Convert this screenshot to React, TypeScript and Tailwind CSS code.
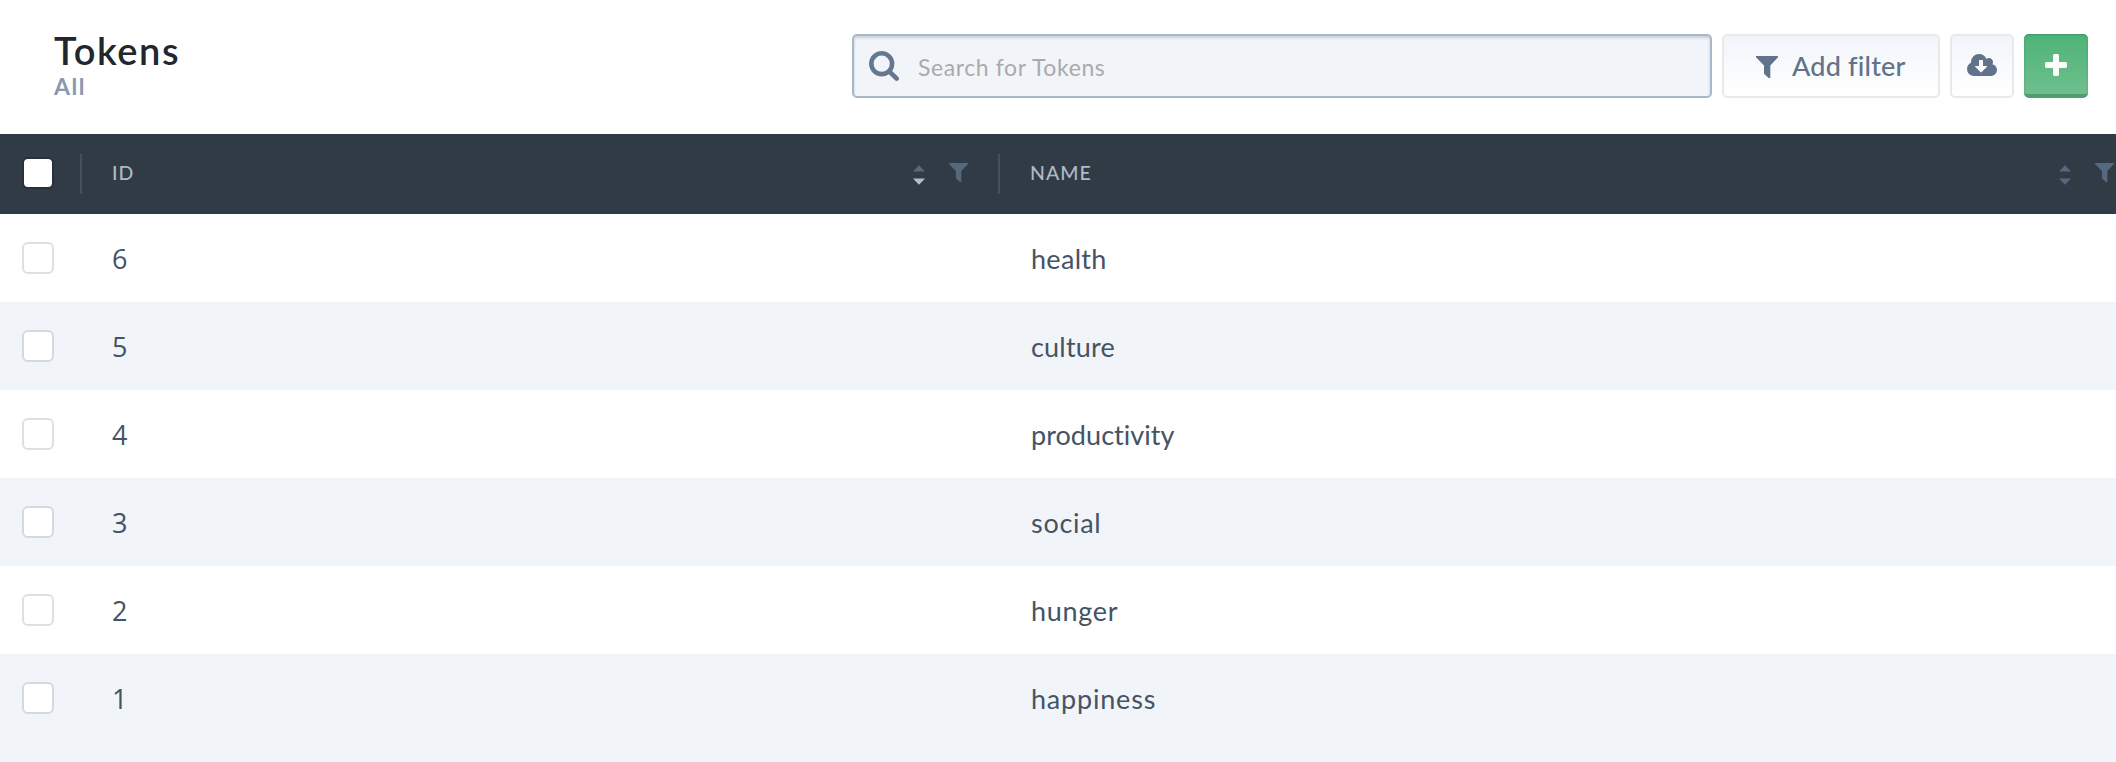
import React from "react";

type IconProps = { d: string; box: string; className: string };

function Icon({ d, box, className }: IconProps) {
  return (
    <svg viewBox={box} className={className} fill="currentColor" preserveAspectRatio="none" aria-hidden="true">
      <path d={d} />
    </svg>
  );
}

const SEARCH =
  "M1216 832q0-185-131.5-316.5t-316.5-131.5-316.5 131.5-131.5 316.5 131.5 316.5 316.5 131.5 316.5-131.5 131.5-316.5zm512 832q0 52-38 90t-90 38q-54 0-90-38l-343-342q-179 124-399 124-143 0-273.5-55.5t-225-150-150-225-55.5-273.5 55.5-273.5 150-225 225-150 273.5-55.5 273.5 55.5 225 150 150 225 55.5 273.5q0 220-124 399l343 343q37 37 37 90z";
const FUNNEL = "M0 0H22V1.2L14.3 9.4V22H12.6L8 17.8V9.4L0 1.2Z";
const CLOUD =
  "M1344 928q0-14-9-23t-23-9h-224v-352q0-13-9.5-22.5t-22.5-9.5h-192q-13 0-22.5 9.5t-9.5 22.5v352h-224q-13 0-22.5 9.5t-9.5 22.5q0 14 9 23l352 352q9 9 23 9t23-9l351-351q10-12 10-24zm640 224q0 159-112.5 271.5t-271.5 112.5h-1088q-185 0-316.5-131.5t-131.5-316.5q0-130 70-240t188-165q-2-30-2-43 0-212 150-362t362-150q156 0 285.5 87t188.5 231q71-62 166-62 106 0 181 75t75 181q0 76-41 138 130 31 213.5 135.5t83.5 238.5z";
const PLUS =
  "M1600 736v192q0 40-28 68t-68 28h-416v416q0 40-28 68t-68 28h-192q-40 0-68-28t-28-68v-416h-416q-40 0-68-28t-28-68v-192q0-40 28-68t68-28h416v-416q0-40 28-68t68-28h192q40 0 68 28t28 68v416h416q40 0 68 28t28 68z";

const rows = [
  { id: "6", name: "health", track: "tracking-[0.3px]" },
  { id: "5", name: "culture", track: "tracking-[0.2px]" },
  { id: "4", name: "productivity", track: "tracking-[0.05px]" },
  { id: "3", name: "social", track: "tracking-[0.7px]" },
  { id: "2", name: "hunger", track: "tracking-[0.7px]" },
  { id: "1", name: "happiness", track: "tracking-[0.8px]" },
];

function SortArrows({ active }: { active?: boolean }) {
  return (
    <svg viewBox="0 0 12 21" className="h-[21px] w-3 shrink-0" aria-hidden="true">
      <path d="M0 7.4L6 1.2L12 7.4Z" fill="#56687d" />
      <path d="M0 14.5H12L6 20.8Z" fill={active ? "#b4bfcb" : "#56687d"} />
    </svg>
  );
}

function HeaderTools({ active }: { active?: boolean }) {
  return (
    <div className="flex shrink-0 items-center">
      <SortArrows active={active} />
      <Icon d={FUNNEL} box="0 0 22 22" className="mb-[3px] ml-6 h-[19px] w-[19px] shrink-0 text-[#56687d]" />
    </div>
  );
}

export default function App() {
  return (
    <div className="flex h-[762px] w-[2116px] flex-col overflow-hidden bg-[#f1f5fa] font-['Lato',sans-serif] [font-variant-ligatures:none]">
      <header className="flex h-[134px] shrink-0 items-start bg-white pt-[34px] pr-7 pl-[54px]">
        <div className="-mt-px flex w-[798px] flex-col">
          <h1 className="h-[38px] text-[38px] leading-[35px] font-semibold tracking-[1.6px] whitespace-nowrap text-[#20272f]">
            Tokens
          </h1>
          <div className="h-7 text-[23px] leading-[30px] font-bold tracking-[1.6px] whitespace-nowrap text-[#8799ae]">
            All
          </div>
        </div>
        <div className="flex h-16 gap-[10px]">
          <label className="flex h-16 w-[860px] shrink-0 items-center rounded-[5px] border-2 border-[#a9b7c7] bg-[#f1f5fa] pl-[15px] shadow-[inset_0_2px_3px_rgba(100,120,145,0.3)]">
            <Icon d={SEARCH} box="64 128 1664 1664" className="h-[30px] w-[30px] shrink-0 text-[#64798f]" />
            <span className="mt-0.5 ml-[19px] text-[23px] leading-8 tracking-[0.6px] whitespace-nowrap text-[#aaaaaa]">
              Search for Tokens
            </span>
          </label>
          <button className="flex h-16 w-[218px] shrink-0 items-center rounded-[5px] border-2 border-[#e7e9eb] bg-linear-to-b from-[#f1f5fa] to-white pl-8 text-[#61738a]">
            <Icon d={FUNNEL} box="0 0 22 22" className="mt-0.5 h-[22px] w-[22px] shrink-0" />
            <span className="ml-[14px] text-[27px] leading-8 font-medium tracking-[0.2px] whitespace-nowrap">
              Add filter
            </span>
          </button>
          <button className="flex h-16 w-16 shrink-0 items-center justify-center rounded-[5px] border-2 border-[#e7e9eb] bg-linear-to-b from-[#f1f5fa] to-white text-[#61738a]">
            <Icon d={CLOUD} box="64 128 1920 1408" className="mb-0.5 h-[22px] w-[30px]" />
          </button>
          <button className="flex h-16 w-16 shrink-0 items-center justify-center rounded-[5px] border-b-4 border-[#519c72] bg-linear-to-b from-[#4eb377] to-[#6dbf8d] text-white shadow-[inset_0_1px_2px_#3c9763]">
            <Icon d={PLUS} box="192 128 1408 1408" className="mt-0.5 h-[22px] w-[22px]" />
          </button>
        </div>
      </header>

      <div className="flex h-20 shrink-0 items-center bg-[#313b45] pl-[22px] text-[19.5px] leading-6 font-medium text-[#aebac7]">
        <span className="mr-[26px] mb-0.5 h-8 w-8 shrink-0 rounded-[6px] border-2 border-[#28303b] bg-white" />
        <div className="flex h-10 w-[918px] shrink-0 items-center justify-between border-l-2 border-[#435163] pr-[30px] pl-[30px]">
          <span className="mb-0.5 tracking-[1px]">ID</span>
          <HeaderTools active />
        </div>
        <div className="flex h-10 w-[1118px] shrink-0 items-center justify-between border-l-2 border-[#435163] pr-[2px] pl-[30px]">
          <span className="mb-0.5 tracking-[1px]">NAME</span>
          <HeaderTools />
        </div>
      </div>

      {rows.map((row, i) => (
        <div
          key={row.id}
          className={`flex h-[88px] shrink-0 items-center pl-[22px] text-[27px] leading-8 whitespace-nowrap text-[#455364] ${i % 2 ? "bg-[#f1f5fa]" : "bg-white"}`}
        >
          <span
            className={`h-8 w-8 shrink-0 rounded-[6px] border-2 bg-white ${i % 2 ? "border-[#d5d9de]" : "border-[#e0e0e0]"}`}
          />
          <span className="mt-0.5 ml-[58px] w-[919px] shrink-0 font-['Open_Sans',sans-serif]">{row.id}</span>
          <span className={`mt-0.5 ${row.track}`}>{row.name}</span>
        </div>
      ))}
    </div>
  );
}
